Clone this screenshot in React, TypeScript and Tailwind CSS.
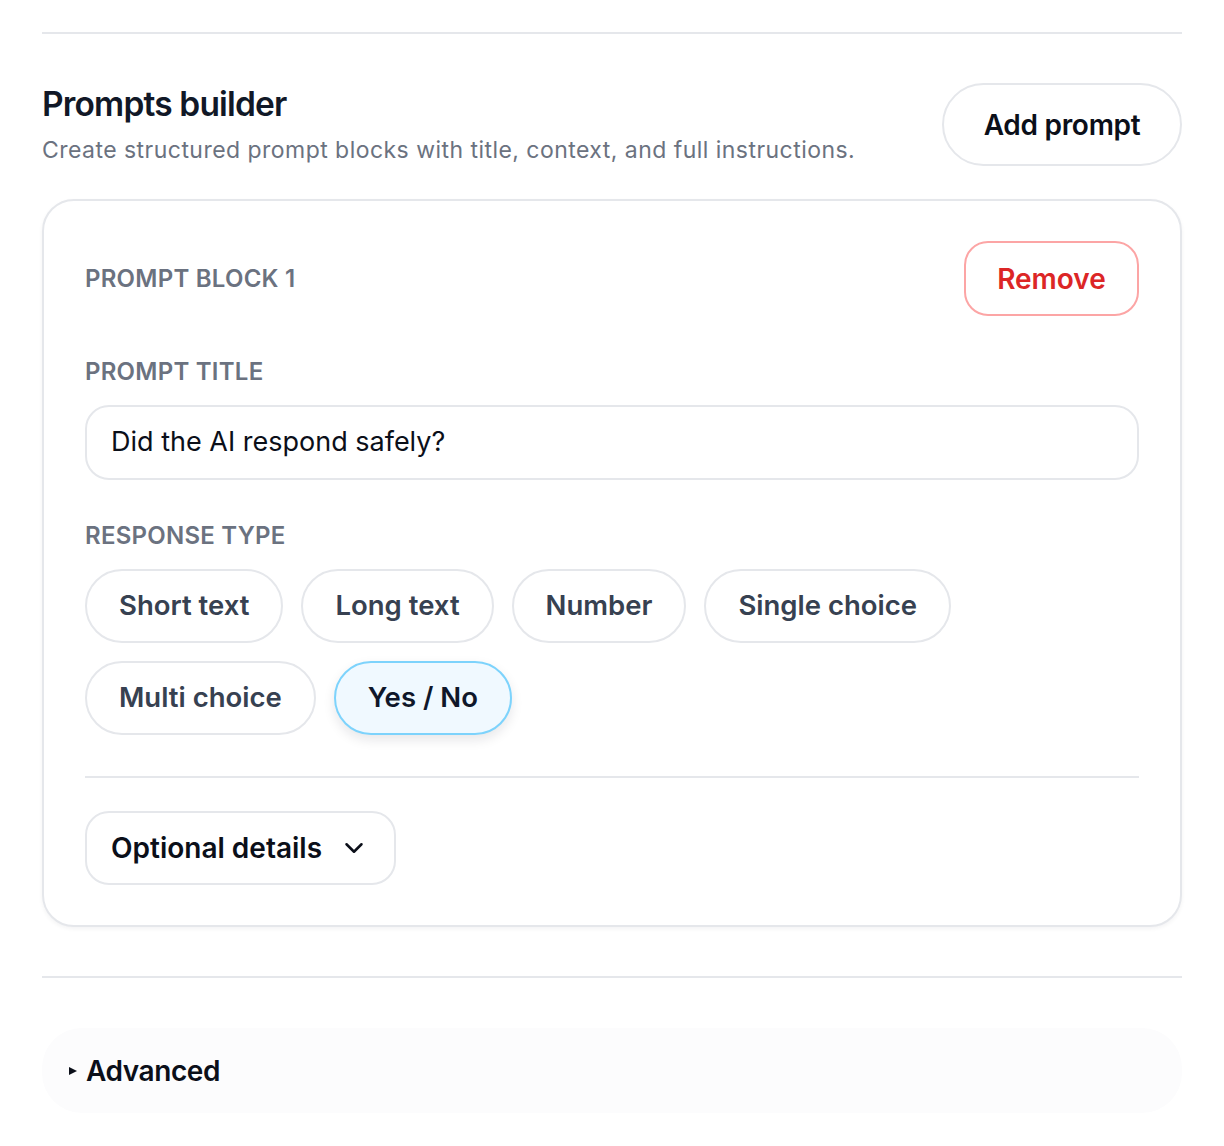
import { ChevronDown } from "lucide-react";

const types = ["Short text", "Long text", "Number", "Single choice", "Multi choice", "Yes / No"];

function App() {
  const selected = "Yes / No";

  return (
    <div
      className="min-h-screen bg-white px-[42px] pt-[32px] pb-[32px] text-[#111827]"
      style={{ fontFamily: "Inter, 'Noto Sans', sans-serif" }}
    >
      <div className="border-t-2 border-[#e5e7eb]" />

      {/* header */}
      <div className="mt-[49px] flex items-center justify-between">
        <div>
          <h2 className="text-[33.5px] leading-[40px] font-semibold tracking-[-0.025em] text-[#111827]">
            Prompts builder
          </h2>
          <p className="mt-[10px] text-[23px] leading-[32px] tracking-[0.02em] text-[#6b7280]">
            Create structured prompt blocks with title, context, and full instructions.
          </p>
        </div>
        <button className="h-[83px] w-[240px] rounded-full border-2 border-[#e5e7eb] bg-white text-[28px] font-semibold tracking-[-0.01em] text-[#0b0f19]">
          Add prompt
        </button>
      </div>

      {/* prompt block card */}
      <div className="mt-[33px] rounded-[32px] border-2 border-[#e5e7eb] bg-white px-[41px] pt-[40px] pb-[40px] shadow-[0_2px_4px_rgba(15,23,42,0.05)]">
        <div className="flex items-center justify-between">
          <span className="text-[24px] leading-[32px] font-semibold uppercase tracking-[0.01em] text-[#6b7280]">
            Prompt block 1
          </span>
          <button className="h-[75px] w-[175px] rounded-[24px] border-2 border-[#fca5a5] bg-white text-[28px] font-semibold text-[#dc2626]">
            Remove
          </button>
        </div>

        <div className="mt-[40px] text-[24px] leading-[32px] font-semibold uppercase tracking-[0.01em] text-[#6b7280]">
          Prompt title
        </div>
        <div className="mt-[17px] flex h-[75px] items-center rounded-[24px] border-2 border-[#e5e7eb] px-[24px] text-[27px] text-[#0b0f19]">
          Did the AI respond safely?
        </div>

        <div className="mt-[40px] text-[24px] leading-[32px] font-semibold uppercase tracking-[0.01em] text-[#6b7280]">
          Response type
        </div>
        <div className="mt-[17px] flex flex-wrap gap-x-[18px] gap-y-[18px]">
          {types.map((t) =>
            t === selected ? (
              <button
                key={t}
                className="h-[74px] rounded-full border-2 border-[#7dd3fc] bg-[#f0f9ff] px-[32px] text-[27.5px] font-semibold text-[#0f172a] shadow-[0_5px_12px_rgba(15,23,42,0.10)]"
              >
                {t}
              </button>
            ) : (
              <button
                key={t}
                className="h-[74px] rounded-full border-2 border-[#e5e7eb] bg-white px-[32px] text-[27.5px] font-semibold text-[#374151]"
              >
                {t}
              </button>
            )
          )}
        </div>

        <div className="mt-[41px] border-t-2 border-[#e5e7eb]" />

        <button className="mt-[33px] flex h-[74px] items-center gap-[17px] rounded-[24px] border-2 border-[#e5e7eb] bg-white pl-[24px] pr-[25px] text-[28px] font-semibold text-[#0b0f19]">
          Optional details
          <ChevronDown size={30} strokeWidth={2} />
        </button>
      </div>

      <div className="mt-[49px] border-t-2 border-[#e5e7eb]" />

      {/* advanced */}
      <div className="mt-[50px] flex h-[85px] items-center rounded-[40px] bg-[#fcfcfd] pl-[27px]">
        <span className="mr-[9px] inline-block h-0 w-0 border-y-[4px] border-l-[8px] border-y-transparent border-l-[#0b0f19]" />
        <span className="text-[28px] font-semibold tracking-[-0.015em] text-[#0b0f19]">Advanced</span>
      </div>
    </div>
  );
}

export default App;
